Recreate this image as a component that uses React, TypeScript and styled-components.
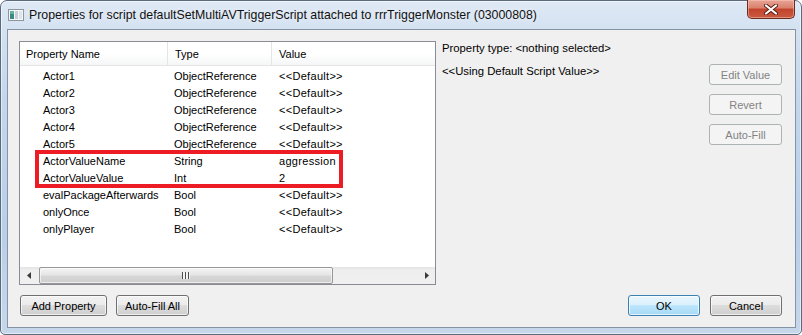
import React from "react";
import styled, { createGlobalStyle } from "styled-components";

const GlobalStyle = createGlobalStyle`
  html, body {
    margin: 0;
    padding: 0;
    width: 802px;
    height: 335px;
    overflow: hidden;
    background: #ffffff;
  }
  body {
    font-family: "Liberation Sans", Arial, sans-serif;
    font-size: 11px;
    color: #000;
  }
  * { box-sizing: border-box; }
`;

interface Property {
  name: string;
  type: string;
  value: string;
}

const properties: Property[] = [
  { name: "Actor1", type: "ObjectReference", value: "<<Default>>" },
  { name: "Actor2", type: "ObjectReference", value: "<<Default>>" },
  { name: "Actor3", type: "ObjectReference", value: "<<Default>>" },
  { name: "Actor4", type: "ObjectReference", value: "<<Default>>" },
  { name: "Actor5", type: "ObjectReference", value: "<<Default>>" },
  { name: "ActorValueName", type: "String", value: "aggression" },
  { name: "ActorValueValue", type: "Int", value: "2" },
  { name: "evalPackageAfterwards", type: "Bool", value: "<<Default>>" },
  { name: "onlyOnce", type: "Bool", value: "<<Default>>" },
  { name: "onlyPlayer", type: "Bool", value: "<<Default>>" },
];

const WindowIcon = () => (
  <svg width="16" height="12" viewBox="0 0 16 12">
    <rect x="0.5" y="0.5" width="15" height="11" fill="#f4f6f8" stroke="#8d969f" />
    <rect x="2" y="2" width="4" height="8" fill="#3c8a86" />
    <rect x="2" y="2" width="4" height="3" fill="#5fb39d" />
    <rect x="7" y="2" width="3" height="8" fill="#c7ced6" />
    <rect x="11" y="2" width="3" height="8" fill="#dfe4e9" />
  </svg>
);

const CloseGlyph = () => (
  <svg width="14" height="11" viewBox="0 0 14 11">
    <path
      d="M2 1.5 L12 9.5 M12 1.5 L2 9.5"
      stroke="#5a1d14"
      strokeWidth="4"
      strokeLinecap="round"
    />
    <path
      d="M2 1.5 L12 9.5 M12 1.5 L2 9.5"
      stroke="#ffffff"
      strokeWidth="2.2"
      strokeLinecap="round"
    />
  </svg>
);

const Arrow = ({ dir }: { dir: "left" | "right" }) => (
  <svg width="4" height="7" viewBox="0 0 4 7">
    <path d={dir === "left" ? "M4 0 L0 3.5 L4 7 Z" : "M0 0 L4 3.5 L0 7 Z"} fill="#3a3a3a" />
  </svg>
);

const App = () => {
  return (
    <>
      <GlobalStyle />
      <Window>
        <TitleBar>
          <WindowIcon />
          <TitleText>
            Properties for script defaultSetMultiAVTriggerScript attached to
            rrrTriggerMonster (03000808)
          </TitleText>
          <CloseButton>
            <CloseGlyph />
          </CloseButton>
        </TitleBar>
        <Client>
          <TopArea>
            <ListBox>
              <HeaderRow>
                <HeaderCell $width={148} $pad={6} $sep>
                  Property Name
                </HeaderCell>
                <HeaderCell $width={104} $pad={7} $sep>
                  Type
                </HeaderCell>
                <HeaderCell $width={162} $pad={7}>
                  Value
                </HeaderCell>
              </HeaderRow>
              <ListBody>
                {properties.map((p) => (
                  <Row key={p.name}>
                    <Cell $width={148} $pad={23}>
                      {p.name}
                    </Cell>
                    <Cell $width={104} $pad={6}>
                      {p.type}
                    </Cell>
                    <ValueCell $width={162} $pad={7}>
                      {p.value}
                    </ValueCell>
                  </Row>
                ))}
              </ListBody>
              <HScroll>
                <ScrollArrow>
                  <Arrow dir="left" />
                </ScrollArrow>
                <Track>
                  <Thumb>
                    <Grip />
                  </Thumb>
                </Track>
                <ScrollArrow>
                  <Arrow dir="right" />
                </ScrollArrow>
              </HScroll>
              <Highlight />
            </ListBox>
            <SidePanel>
              <InfoLine>Property type: &lt;nothing selected&gt;</InfoLine>
              <ValueRow>
                <InfoLine>&lt;&lt;Using Default Script Value&gt;&gt;</InfoLine>
                <ButtonColumn>
                  <Button disabled>Edit Value</Button>
                  <Button disabled>Revert</Button>
                  <Button disabled>Auto-Fill</Button>
                </ButtonColumn>
              </ValueRow>
            </SidePanel>
          </TopArea>
          <BottomBar>
            <ButtonGroup $gap={9}>
              <Button $width={87}>Add Property</Button>
              <Button>Auto-Fill All</Button>
            </ButtonGroup>
            <ButtonGroup $gap={10}>
              <Button $primary $width={72}>
                OK
              </Button>
              <Button $width={72}>Cancel</Button>
            </ButtonGroup>
          </BottomBar>
        </Client>
      </Window>
    </>
  );
};

export default App;

const Window = styled.div`
  width: 802px;
  height: 335px;
  display: flex;
  flex-direction: column;
  border: 1px solid #5b6b7e;
  border-radius: 7px 7px 5px 5px;
  background: linear-gradient(
    180deg,
    #dfe9f5 0%,
    #d3e1f1 9%,
    #c3d6ec 30%,
    #b9cfe8 70%,
    #c6d7ea 100%
  );
  box-shadow: inset 0 0 0 1px rgba(255, 255, 255, 0.55);
`;

const TitleBar = styled.div`
  height: 28px;
  display: flex;
  align-items: center;
  padding-left: 7px;
  flex-shrink: 0;
`;

const TitleText = styled.div`
  margin-left: 5px;
  font-size: 12.35px;
  color: #111;
  white-space: nowrap;
  text-shadow: 0 0 6px rgba(255, 255, 255, 0.9);
`;

const CloseButton = styled.div`
  margin-left: auto;
  margin-right: 6px;
  align-self: flex-start;
  width: 48px;
  height: 19px;
  margin-top: -1px;
  display: flex;
  align-items: center;
  justify-content: center;
  border: 1px solid #6b2c22;
  border-top: none;
  border-radius: 0 0 5px 5px;
  background: linear-gradient(
    180deg,
    #e8a495 0%,
    #d9806c 45%,
    #c3432c 50%,
    #c95a40 100%
  );
  box-shadow: inset 0 0 0 1px rgba(255, 210, 200, 0.45);
`;

const Client = styled.div`
  flex: 1;
  margin: 0 5px 6px 6px;
  border: 1px solid #8593a4;
  background: #f0f0f0;
  display: flex;
  flex-direction: column;
  padding: 11px 13px 11px 11px;
`;

const TopArea = styled.div`
  display: flex;
  height: 244px;
`;

const ListBox = styled.div`
  position: relative;
  width: 417px;
  height: 244px;
  border: 1px solid #898c95;
  background: #ffffff;
  display: flex;
  flex-direction: column;
`;

const HeaderRow = styled.div`
  display: flex;
  height: 24px;
  flex-shrink: 0;
  background: linear-gradient(180deg, #ffffff 0%, #ffffff 50%, #f5f6f7 100%);
  border-bottom: 1px solid #e5e5e5;
`;

const HeaderCell = styled.div<{ $width: number; $pad: number; $sep?: boolean }>`
  width: ${(p) => p.$width}px;
  padding-left: ${(p) => p.$pad}px;
  display: flex;
  align-items: center;
  border-right: ${(p) => (p.$sep ? "1px solid #e5e5e5" : "none")};
  white-space: nowrap;
`;

const ListBody = styled.div`
  flex: 1;
  padding-top: 1px;
`;

const Row = styled.div`
  display: flex;
  height: 17px;
  align-items: center;
`;

const Cell = styled.div<{ $width: number; $pad: number }>`
  width: ${(p) => p.$width}px;
  padding-left: ${(p) => p.$pad}px;
  white-space: nowrap;
  overflow: hidden;
`;

const ValueCell = styled(Cell)`
  letter-spacing: 0.3px;
`;

const HScroll = styled.div`
  display: flex;
  height: 17px;
  flex-shrink: 0;
  background: linear-gradient(180deg, #e4e4e4 0%, #eeeeee 20%, #f0f0f0 100%);
`;

const ScrollArrow = styled.div`
  width: 17px;
  display: flex;
  align-items: center;
  justify-content: center;
`;

const Track = styled.div`
  flex: 1;
  padding: 0 85px 0 2px;
  display: flex;
`;

const Thumb = styled.div`
  width: 294px;
  margin: 0;
  border: 1px solid #979797;
  border-radius: 2px;
  background: linear-gradient(180deg, #f4f4f4 0%, #e6e6e6 45%, #d6d6d6 55%, #cfcfcf 100%);
  box-shadow: inset 0 0 0 1px rgba(255, 255, 255, 0.6);
  display: flex;
  align-items: center;
  justify-content: center;
`;

const Grip = styled.div`
  width: 8px;
  height: 7px;
  background: repeating-linear-gradient(
    90deg,
    #4e4e4e 0px,
    #4e4e4e 1px,
    #f4f4f4 1px,
    #f4f4f4 3px
  );
`;

const Highlight = styled.div`
  position: absolute;
  left: 15px;
  top: 108px;
  width: 308px;
  height: 38px;
  border: 4px solid #ed1c24;
  pointer-events: none;
`;

const SidePanel = styled.div`
  flex: 1;
  padding-left: 6px;
  display: flex;
  flex-direction: column;
`;

const InfoLine = styled.div`
  line-height: 14px;
  white-space: nowrap;
  font-size: 11.3px;
`;

const ValueRow = styled.div`
  margin-top: 9px;
  display: flex;
  justify-content: space-between;
  align-items: flex-start;
`;

const ButtonColumn = styled.div`
  display: flex;
  flex-direction: column;
  gap: 9px;
`;

const BottomBar = styled.div`
  margin-top: 10px;
  display: flex;
  justify-content: space-between;
  padding-left: 1px;
`;

const ButtonGroup = styled.div<{ $gap: number }>`
  display: flex;
  gap: ${(p) => p.$gap}px;
`;

const Button = styled.button<{ $primary?: boolean; $width?: number }>`
  width: ${(p) => p.$width ?? 73}px;
  height: 21px;
  padding: 0;
  font-family: "Liberation Sans", Arial, sans-serif;
  font-size: 11px;
  color: #000;
  border-radius: 3px;
  border: 1px solid ${(p) => (p.$primary ? "#3c7fb1" : "#707070")};
  background: ${(p) =>
    p.$primary
      ? "linear-gradient(180deg, #eaf6fd 0%, #d9f0fc 50%, #bee6fd 50%, #a7d9f5 100%)"
      : "linear-gradient(180deg, #f2f2f2 0%, #ebebeb 50%, #dddddd 50%, #cfcfcf 100%)"};
  box-shadow: inset 0 0 0 1px
    ${(p) => (p.$primary ? "rgba(255,255,255,0.7)" : "rgba(255,255,255,0.65)")};

  &:disabled {
    color: #838383;
    border-color: #adb2b5;
    background: #f4f4f4;
    box-shadow: none;
  }
`;
